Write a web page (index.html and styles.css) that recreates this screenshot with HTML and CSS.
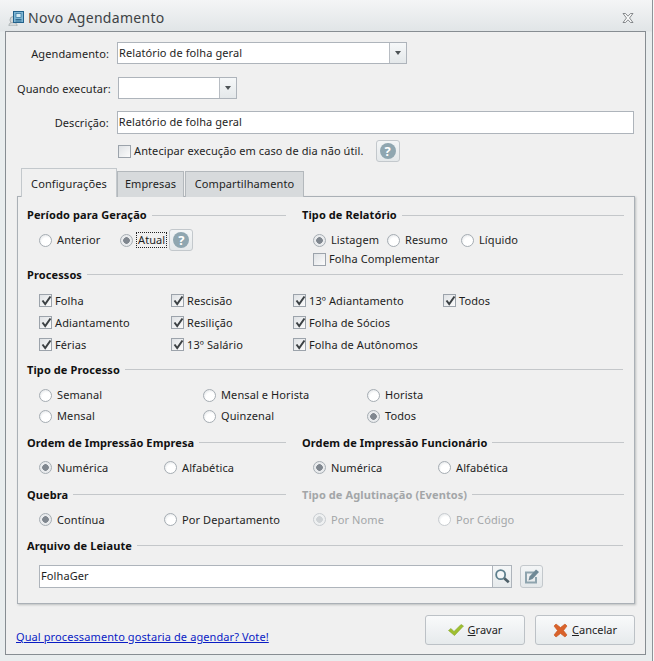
FILE: index.html
```html
<!DOCTYPE html>
<html lang="pt">
<head>
<meta charset="utf-8">
<title>Novo Agendamento</title>
<link rel="stylesheet" href="styles.css">
</head>
<body>
<svg class="defs" width="0" height="0" aria-hidden="true">
  <symbol id="tick" viewBox="0 0 13 13"><path d="M2.5 6.5 L5.2 10 L10.5 2.5" fill="none" stroke="#3c4144" stroke-width="2"/></symbol>
</svg>
<div class="strip"></div>
<div class="window">
  <header class="titlebar">
    <svg class="title-icon" viewBox="0 0 16 16" width="16" height="16">
      <ellipse cx="5" cy="10" rx="3" ry="3.4" fill="#d5dadb" stroke="#a9b0b2"/>
      <path d="M1 16c0-3 1.500-3.500 4-3.500s4 .5 4 3.500z" fill="#d5dadb" stroke="#a9b0b2"/>
      <rect x="5.500" y="1.500" width="10" height="11" fill="#7fb6d4" stroke="#23628c"/>
      <rect x="8" y="3.500" width="5" height="4" fill="#d8ecf4" stroke="#2d6f9a" stroke-width=".7"/>
      <path d="M7.500 9.500h6M7.500 11h6" stroke="#1f5b82" stroke-width=".8"/>
    </svg>
    <span class="title-text">Novo Agendamento</span>
    <svg class="close-icon" viewBox="0 0 12 10" width="12" height="10"><path d="M1 .5h2.500L6 3.200 8.500.5H11L7.500 5 11 9.500H8.500L6 6.800 3.500 9.500H1L4.500 5z" fill="#fafbfb" stroke="#6c7073" stroke-width=".8"/></svg>
  </header>
  <main class="panel">
    <div class="form-row row-a">
      <label class="form-label">Agendamento:</label>
      <div class="combo combo-wide"><span class="combo-value">Relatório de folha geral</span><span class="combo-btn"><i class="arrow"></i></span></div>
    </div>
    <div class="form-row row-b">
      <label class="form-label label-narrow">Quando executar:</label>
      <div class="combo combo-short"><span class="combo-value"></span><span class="combo-btn"><i class="arrow"></i></span></div>
    </div>
    <div class="form-row row-c">
      <label class="form-label">Descrição:</label>
      <div class="text-input input-full">Relatório de folha geral</div>
    </div>
    <div class="form-row row-d">
      <label class="check check-plain"><i class="box"></i><span>Antecipar execução em caso de dia não útil.</span></label>
      <button class="icon-btn help-top"><span class="help">?</span></button>
    </div>

    <nav class="tabs">
      <span class="tab tab-active">Configurações</span>
      <span class="tab tab-two">Empresas</span>
      <span class="tab tab-three">Compartilhamento</span>
    </nav>
    <section class="tab-panel">
      <div class="two-col first-group">
        <div class="group group-left">
          <h3 class="legend"><span>Período para Geração</span></h3>
          <div class="periodo">
            <label class="radio r-anterior"><i class="dot"></i><span>Anterior</span></label>
            <label class="radio"><i class="dot on"></i><span class="focus">Atual</span></label>
            <button class="icon-btn help-inline"><span class="help">?</span></button>
          </div>
        </div>
        <div class="group group-right">
          <h3 class="legend"><span>Tipo de Relatório</span></h3>
          <div class="tipo">
            <label class="radio r-listagem"><i class="dot on"></i><span>Listagem</span></label>
            <label class="radio r-resumo"><i class="dot"></i><span>Resumo</span></label>
            <label class="radio"><i class="dot"></i><span>Líquido</span></label>
          </div>
          <label class="check check-comp"><i class="box"></i><span>Folha Complementar</span></label>
        </div>
      </div>

      <h3 class="legend legend-full proc-legend"><span>Processos</span></h3>
      <div class="proc-grid">
        <label class="check"><i class="box"><svg><use href="#tick"/></svg></i><span>Folha</span></label>
        <label class="check"><i class="box"><svg><use href="#tick"/></svg></i><span>Rescisão</span></label>
        <label class="check"><i class="box"><svg><use href="#tick"/></svg></i><span>13º Adiantamento</span></label>
        <label class="check"><i class="box"><svg><use href="#tick"/></svg></i><span>Todos</span></label>
        <label class="check"><i class="box"><svg><use href="#tick"/></svg></i><span>Adiantamento</span></label>
        <label class="check"><i class="box"><svg><use href="#tick"/></svg></i><span>Resilição</span></label>
        <label class="check"><i class="box"><svg><use href="#tick"/></svg></i><span>Folha de Sócios</span></label>
        <span></span>
        <label class="check"><i class="box"><svg><use href="#tick"/></svg></i><span>Férias</span></label>
        <label class="check"><i class="box"><svg><use href="#tick"/></svg></i><span>13º Salário</span></label>
        <label class="check"><i class="box"><svg><use href="#tick"/></svg></i><span>Folha de Autônomos</span></label>
      </div>

      <h3 class="legend legend-full tp-legend"><span>Tipo de Processo</span></h3>
      <div class="tp-grid">
        <label class="radio"><i class="dot"></i><span>Semanal</span></label>
        <label class="radio"><i class="dot"></i><span>Mensal e Horista</span></label>
        <label class="radio"><i class="dot"></i><span>Horista</span></label>
        <label class="radio"><i class="dot"></i><span>Mensal</span></label>
        <label class="radio"><i class="dot"></i><span>Quinzenal</span></label>
        <label class="radio"><i class="dot on"></i><span>Todos</span></label>
      </div>

      <div class="two-col ordem-group">
        <div class="group group-left">
          <h3 class="legend"><span>Ordem de Impressão Empresa</span></h3>
          <div class="pair">
            <label class="radio"><i class="dot on"></i><span>Numérica</span></label>
            <label class="radio"><i class="dot"></i><span>Alfabética</span></label>
          </div>
        </div>
        <div class="group group-right">
          <h3 class="legend"><span>Ordem de Impressão Funcionário</span></h3>
          <div class="pair">
            <label class="radio"><i class="dot on"></i><span>Numérica</span></label>
            <label class="radio"><i class="dot"></i><span>Alfabética</span></label>
          </div>
        </div>
      </div>

      <div class="two-col quebra-group">
        <div class="group group-left">
          <h3 class="legend"><span>Quebra</span></h3>
          <div class="pair">
            <label class="radio"><i class="dot on"></i><span>Contínua</span></label>
            <label class="radio"><i class="dot"></i><span>Por Departamento</span></label>
          </div>
        </div>
        <div class="group group-right is-disabled">
          <h3 class="legend"><span>Tipo de Aglutinação (Eventos)</span></h3>
          <div class="pair">
            <label class="radio"><i class="dot on"></i><span>Por Nome</span></label>
            <label class="radio"><i class="dot"></i><span>Por Código</span></label>
          </div>
        </div>
      </div>

      <h3 class="legend legend-full arq-legend"><span>Arquivo de Leiaute</span></h3>
      <div class="arq-row">
        <div class="text-input input-arq">FolhaGer</div>
        <span class="search-btn">
          <svg viewBox="0 0 20 20" width="20" height="20"><circle cx="8.500" cy="8.500" r="5" fill="#f4f7f8" stroke="#5d7f8d" stroke-width="2"/><path d="M12.500 12.500 L17.500 17" stroke="#4d5f68" stroke-width="3"/></svg>
        </span>
        <button class="icon-btn edit-btn">
          <svg viewBox="0 0 18 18" width="18" height="18"><path d="M2 4.500h9v2H4v8h8V10h2v6.500H2z" fill="#8ea4ae"/><path d="M6.500 9.500 13 2.500l3 2.500-6.500 7-4 1.500z" fill="#6f8996"/></svg>
        </button>
      </div>
    </section>

    <footer class="footer">
      <a class="vote" href="#">Qual processamento gostaria de agendar? Vote!</a>
      <div class="actions">
        <button class="action">
          <svg viewBox="0 0 16 12" width="16" height="12"><path d="M0.500 6.500 L3 4.500 L6 7.500 L13 .5 L15.500 2 L6.500 11.500z" fill="#9fbf2f" stroke="#84a52c" stroke-width=".6"/></svg>
          <span><u>G</u>ravar</span>
        </button>
        <button class="action">
          <svg viewBox="0 0 15 15" width="15" height="15"><path d="M1 3 L3 1 L7.500 4.500 L12 1 L14 3 L10.500 7.500 L14 12 L12 14 L7.500 10.500 L3 14 L1 12 L4.500 7.500z" fill="#d9622b" stroke="#c4561f" stroke-width=".6"/></svg>
          <span><u>C</u>ancelar</span>
        </button>
      </div>
    </footer>
  </main>
</div>
</body>
</html>
```
FILE: styles.css
```css
* { box-sizing: border-box; }
html, body { margin: 0; padding: 0; }
body {
  width: 654px;
  height: 661px;
  overflow: hidden;
  background: #f8f8f8;
  font-family: "Noto Sans", "Open Sans", sans-serif;
  font-size: 11px;
  line-height: 14px;
  letter-spacing: .1px;
  color: #1e1e1e;
  position: relative;
}
.defs { position: absolute; }
.strip {
  position: absolute;
  right: 0; top: 0;
  width: 2px; height: 661px;
  background: #f7f7f7;
  border-left: 1px solid #8d9499;
}
.window {
  width: 652px;
  height: 661px;
  padding: 1px 6px 6px 5px;
  background: linear-gradient(#f4f5f6, #e1e5e7 31px, #e9edee 32px);
}
.titlebar {
  height: 30px;
  display: flex;
  align-items: center;
  padding: 3px 12px 0 3px;
}
.title-text {
  margin-left: 4px;
  font-size: 14px;
  color: #3d4245;
  letter-spacing: .3px;
}
.close-icon { margin-left: auto; }
.panel {
  height: 624px;
  background: #f0f0f0;
  border: 1px solid #878d92;
  padding: 0 11px;
  display: flex;
  flex-direction: column;
}
.form-row { display: flex; align-items: center; }
.row-a { height: 22px; margin-top: 10px; }
.row-b { height: 22px; margin-top: 13px; }
.row-c { height: 23px; margin-top: 12px; }
.row-d { height: 22px; margin-top: 6px; padding-left: 101px; }
.form-label { width: 92px; text-align: right; margin-right: 8px; white-space: nowrap; }
.row-a .form-label, .row-b .form-label { padding-top: 2px; }
.label-narrow { margin-right: 9px; }
.combo {
  display: flex;
  height: 22px;
  background: #fff;
  border: 1px solid #aeb4bb;
}
.combo-wide { width: 290px; }
.combo-short { width: 119px; }
.combo-value { flex: 1; padding: 3px 1px; }
.combo-btn {
  width: 17px;
  border-left: 1px solid #b8bdc3;
  background: linear-gradient(#f6f8f9, #e4e8ea);
  display: flex;
  align-items: center;
  justify-content: center;
}
.arrow {
  width: 0; height: 0;
  border-left: 3.500px solid transparent;
  border-right: 3.500px solid transparent;
  border-top: 4px solid #4d5356;
}
.text-input {
  background: #fff;
  border: 1px solid #aeb4bb;
  padding: 3px 1px;
  height: 23px;
}
.input-full { width: 518px; }
.check, .radio { display: inline-flex; align-items: center; white-space: nowrap; height: 16px; }
.box {
  width: 13px; height: 13px;
  flex: none;
  border: 1px solid #9ca3ab;
  background: linear-gradient(135deg, #dfe2e5, #fbfbfb);
  margin-right: 3px;
  display: block;
  position: relative;
}
.box svg { position: absolute; left: 0; top: -1px; width: 13px; height: 13px; }
.dot {
  width: 13px; height: 13px;
  flex: none;
  border-radius: 50%;
  border: 1px solid #a6adb3;
  background: radial-gradient(circle at 60% 65%, #fff 45%, #d8dcdf);
  margin-right: 5px;
  display: block;
}
.dot.on { background: radial-gradient(circle, #80878f 0 3px, #e9ebed 3.600px); }
.icon-btn {
  padding: 0;
  border: 1px solid #c3c8cc;
  border-radius: 3px;
  background: linear-gradient(#f3f5f6, #e4e8ea);
  display: inline-flex;
  align-items: center;
  justify-content: center;
}
.help-top { width: 24px; height: 22px; margin-left: 12px; }
.help-inline { width: 24px; height: 22px; margin-left: 3px; }
.help {
  width: 16px; height: 16px;
  border-radius: 50%;
  background: #8fa6b0;
  color: #fff;
  font: bold 13px/16px "Noto Sans", sans-serif;
  text-align: center;
}
.tabs { display: flex; align-items: flex-end; height: 29px; margin-top: 6px; padding-left: 4px; position: relative; z-index: 1; }
.tab {
  height: 26px;
  padding: 5px 0 0;
  text-align: center;
  background: #d7dadc;
  border: 1px solid #b3b8bc;
  border-bottom: 0;
}
.tab-active { width: 96px; height: 29px; background: #f0f0f0; padding-top: 8px; border-color: #c3c8cc; }
.tab-two { width: 67px; }
.tab-three { width: 119px; margin-left: 1px; }
.tab-panel {
  width: 618px;
  height: 408px;
  margin-top: -1px;
  border: 1px solid #aab0b6;
  box-shadow: 1px 1px 2px rgba(90, 96, 100, .35);
  padding: 11px 0 0 9px;
}
.two-col { display: grid; grid-template-columns: 259px 322px; column-gap: 16px; }
.legend {
  margin: 0;
  height: 14px;
  display: flex;
  align-items: center;
  font-size: 11px;
  font-weight: 700;
  color: #111;
  white-space: nowrap;
}
.legend::after { content: ""; flex: 1; height: 1px; background: #c4c7ca; margin-left: 5px; }
.legend-full { width: 596px; }
.periodo { display: flex; align-items: center; margin-top: 7px; padding-left: 12px; height: 22px; }
.r-anterior { width: 81px; }
.focus { outline: 1px dotted #222; outline-offset: 0; padding: 0 1px; margin-left: -1px; }
.tipo { display: flex; align-items: center; margin-top: 7px; padding-left: 11px; height: 22px; }
.r-listagem { width: 74px; }
.r-resumo { width: 74px; }
.check-comp { margin: 0 0 0 11px; }
.proc-legend { margin-top: -1px; }
.proc-grid {
  display: grid;
  grid-template-columns: 132px 122px 150px 1fr;
  grid-auto-rows: 22px;
  align-items: center;
  padding-left: 12px;
  margin-top: 8px;
  width: 590px;
}
.tp-legend { margin-top: 7px; }
.tp-grid {
  display: grid;
  grid-template-columns: 164px 164px 1fr;
  grid-auto-rows: 21px;
  align-items: center;
  padding-left: 12px;
  margin-top: 8px;
}
.ordem-group { margin-top: 9px; }
.quebra-group { margin-top: 11px; }
.pair { display: grid; grid-template-columns: 125px 1fr; align-items: center; padding-left: 12px; margin-top: 9px; height: 18px; }
.group-right .pair { padding-left: 11px; }
.is-disabled { color: #a3a6a8; }
.is-disabled .legend { color: #a3a6a8; }
.is-disabled .dot { border-color: #c8ccd0; }
.is-disabled .dot.on { background: radial-gradient(circle, #cfd3d6 0 3px, #eef0f1 3.600px); }
.arq-legend { margin-top: 10px; }
.arq-row { display: flex; align-items: center; padding-left: 12px; margin-top: 12px; height: 23px; }
.input-arq { width: 454px; }
.search-btn {
  width: 20px; height: 23px;
  margin-left: -1px;
  border: 1px solid #aeb4bb;
  background: linear-gradient(#f5f7f8, #e6eaec);
  display: flex; align-items: center; justify-content: center;
}
.search-btn svg { width: 18px; height: 18px; }
.edit-btn { width: 23px; height: 23px; margin-left: 8px; }
.footer { display: flex; align-items: flex-start; justify-content: space-between; margin-top: 11px; width: 618px; }
.vote { color: #0a1cc4; margin-top: 15px; margin-left: -1px; }
.actions { display: flex; gap: 10px; }
.action {
  width: 100px; height: 30px;
  border: 1px solid #bcc1c6;
  border-radius: 3px;
  background: linear-gradient(#f9fafb, #e6eaec);
  font: inherit;
  color: #222;
  display: flex; align-items: center; justify-content: center; gap: 4px;
  padding: 0;
}
```
